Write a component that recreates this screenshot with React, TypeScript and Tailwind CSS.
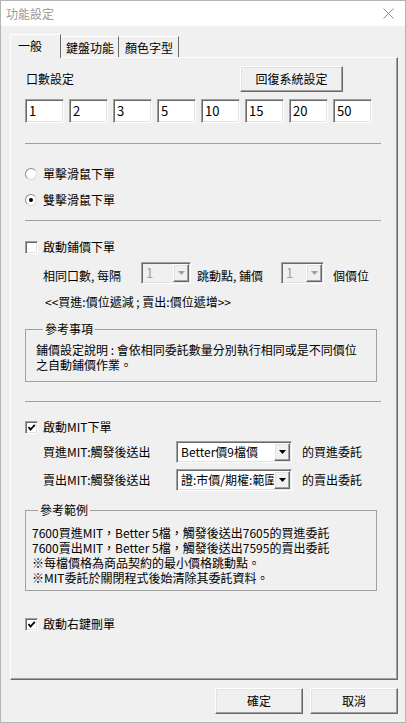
const sunken =
  'border border-t-[#a0a0a0] border-l-[#a0a0a0] border-b-white border-r-white shadow-[inset_1px_1px_0_#696969,inset_-1px_-1px_0_#e3e3e3]';
const raised =
  'border border-t-white border-l-white border-b-[#696969] border-r-[#696969] shadow-[inset_-1px_-1px_0_#a0a0a0,inset_1px_1px_0_#e3e3e3]';

const quantities = ['1', '2', '3', '5', '10', '15', '20', '50'];

const Checkbox = ({ checked }: { checked?: boolean }) => (
  <span className={`w-[13px] h-[13px] bg-white flex items-center justify-center shrink-0 ${sunken}`}>
    {checked && (
      <svg width="9" height="9" viewBox="0 0 9 9">
        <path d="M1.5 4 L3.5 6.5 L7.8 1.8" stroke="#000" strokeWidth="1.8" fill="none" />
      </svg>
    )}
  </span>
);

const Radio = ({ checked }: { checked?: boolean }) => (
  <span className="w-[12px] h-[12px] rounded-full bg-white border border-t-[#8a8a8a] border-l-[#8a8a8a] border-b-[#d8d8d8] border-r-[#d8d8d8] flex items-center justify-center shrink-0">
    {checked && <span className="w-[4px] h-[4px] rounded-full bg-black" />}
  </span>
);

const Arrow = ({ color }: { color: string }) => (
  <svg width="7" height="4" viewBox="0 0 7 4">
    <path d="M0 0 H7 L3.5 4 Z" fill={color} />
  </svg>
);

const Combo = ({ text, width, disabled }: { text: string; width: string; disabled?: boolean }) => (
  <div className={`${width} h-[22px] flex p-px shrink-0 ${disabled ? 'bg-[#f0f0f0]' : 'bg-white'} ${sunken}`}>
    <div
      className={`flex-1 min-w-0 overflow-hidden whitespace-nowrap pl-[3px] leading-[18px] ${
        disabled ? 'text-[#a0a0a0] text-[13px]' : 'text-black'
      }`}
    >
      {text}
    </div>
    <div className={`w-[16px] h-[18px] bg-[#f0f0f0] flex items-center justify-center shrink-0 ${raised}`}>
      <Arrow color={disabled ? '#a0a0a0' : '#000'} />
    </div>
  </div>
);

const Button = ({ children, width }: { children: string; width: string }) => (
  <div className={`${width} h-[26px] flex items-center justify-center bg-[#f0f0f0] ${raised}`}>{children}</div>
);

const Separator = ({ mt }: { mt: string }) => <div className={`${mt} h-px w-[356px] bg-[#a0a0a0]`} />;

export default function App() {
  return (
    <div className="w-[406px] h-[723px] flex flex-col bg-[#f0f0f0] border border-[#b4b4b4] text-[12px] leading-4 text-black font-['Noto_Sans_CJK_TC','Noto_Sans',sans-serif] select-none">
      {/* title bar */}
      <div className="h-[25px] bg-white flex items-center justify-between pl-[5px] pr-[11px] text-[#999999]">
        <span>功能設定</span>
        <svg width="11" height="11" viewBox="0 0 11 11">
          <path d="M0.5 0.5 L10.5 10.5 M10.5 0.5 L0.5 10.5" stroke="#8c8c8c" strokeWidth="1" />
        </svg>
      </div>

      {/* tabs */}
      <div className="h-[31px] flex items-end pl-[9px]">
        <div className="relative z-10 -mb-px w-[51px] h-[24px] pl-[7px] pt-[3px] bg-[#f0f0f0] border-l border-t border-r border-l-white border-t-white border-r-[#696969]">
          一般
        </div>
        <div className="w-[58px] h-[21px] pl-[5px] pt-[3px] border-t border-r border-t-white border-r-[#696969] whitespace-nowrap">
          鍵盤功能
        </div>
        <div className="w-[60px] h-[21px] pl-[6px] pt-[3px] border-t border-r border-t-white border-r-[#696969] whitespace-nowrap">
          顏色字型
        </div>
      </div>

      {/* tab panel */}
      <div className="ml-[9px] w-[388px] h-[623px] flex flex-col pl-[14px] border border-t-white border-l-white border-b-[#696969] border-r-[#696969] shadow-[inset_-1px_-1px_0_#a0a0a0]">
        <div className="mt-[8px] flex items-center">
          <span className="w-[215px] pl-px">口數設定</span>
          <Button width="w-[103px]">回復系統設定</Button>
        </div>

        <div className="mt-[7px] flex gap-[5px]">
          {quantities.map((q, i) => (
            <div
              key={i}
              className={`w-[39px] h-[24px] bg-white pl-[3px] text-[13px] leading-[22px] ${sunken}`}
            >
              {q}
            </div>
          ))}
        </div>

        <Separator mt="mt-[20px]" />

        <div className="mt-[22px] h-4 flex items-center gap-[6px]">
          <Radio />
          <span>單擊滑鼠下單</span>
        </div>
        <div className="mt-[10px] h-4 flex items-center gap-[6px]">
          <Radio checked />
          <span>雙擊滑鼠下單</span>
        </div>

        <Separator mt="mt-[12px]" />

        <div className="mt-[18px] h-4 flex items-center gap-[5px]">
          <Checkbox />
          <span>啟動鋪價下單</span>
        </div>

        <div className="mt-[7px] h-[22px] flex items-end">
          <span className="w-[116px] pl-[18px] whitespace-nowrap">相同口數, 每隔</span>
          <Combo text="1" width="w-[50px]" disabled />
          <span className="w-[90px] pl-[6px] whitespace-nowrap">跳動點, 鋪價</span>
          <Combo text="1" width="w-[43px]" disabled />
          <span className="ml-[9px]">個價位</span>
        </div>

        <div className="mt-[10px] pl-[20px] h-4 whitespace-nowrap">&lt;&lt;買進:價位遞減 ; 賣出:價位遞增&gt;&gt;</div>

        <fieldset className="mt-[11px] w-[352px] border border-[#a0a0a0] pl-[10px] pb-[9px]">
          <legend className="ml-[7px] px-[2px] leading-4">參考事項</legend>
          <div className="mt-[5px] leading-[15px]">
            <div>鋪價設定說明 : 會依相同委託數量分別執行相同或是不同價位</div>
            <div>之自動鋪價作業。</div>
          </div>
        </fieldset>

        <Separator mt="mt-[19px]" />

        <div className="mt-[17px] h-4 flex items-center gap-[5px]">
          <Checkbox checked />
          <span>啟動MIT下單</span>
        </div>

        <div className="mt-[6px] flex items-center">
          <span className="w-[151px] pl-[18px] whitespace-nowrap">買進MIT:觸發後送出</span>
          <Combo text="Better價9檔價" width="w-[116px]" />
          <span className="ml-[10px]">的買進委託</span>
        </div>
        <div className="mt-[6px] flex items-center">
          <span className="w-[151px] pl-[18px] whitespace-nowrap">賣出MIT:觸發後送出</span>
          <Combo text="證:市價/期權:範圍市價" width="w-[116px]" />
          <span className="ml-[10px]">的賣出委託</span>
        </div>

        <fieldset className="mt-[11px] w-[352px] border border-[#a0a0a0] pl-[6px] pb-[5px]">
          <legend className="ml-[6px] px-[2px] leading-4">參考範例</legend>
          <div className="mt-[7px] leading-[15px] whitespace-nowrap">
            <div>7600買進MIT，Better 5檔，觸發後送出7605的買進委託</div>
            <div>7600賣出MIT，Better 5檔，觸發後送出7595的賣出委託</div>
            <div>※每檔價格為商品契約的最小價格跳動點。</div>
            <div>※MIT委託於關閉程式後始清除其委託資料。</div>
          </div>
        </fieldset>

        <div className="mt-[25px] h-4 flex items-center gap-[5px]">
          <Checkbox checked />
          <span>啟動右鍵刪單</span>
        </div>
      </div>

      {/* dialog buttons */}
      <div className="mt-[8px] flex justify-end gap-[7px] pr-[7px]">
        <Button width="w-[88px]">確定</Button>
        <Button width="w-[88px]">取消</Button>
      </div>
    </div>
  );
}
